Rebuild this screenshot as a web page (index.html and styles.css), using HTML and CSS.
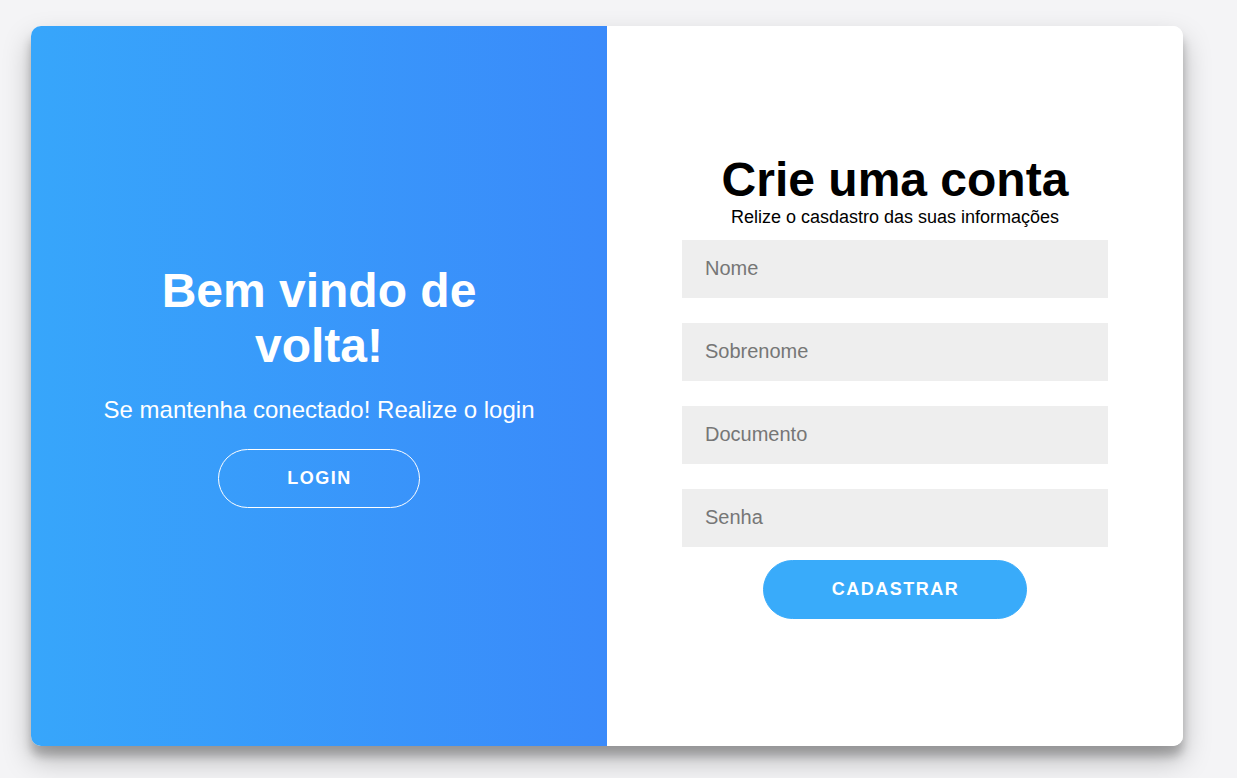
FILE: index.html
```html
<!DOCTYPE html>
<html lang="pt-BR">
<head>
<meta charset="utf-8">
<title>Crie uma conta</title>
<link rel="stylesheet" href="styles.css">
</head>
<body>
  <div class="card">
    <section class="panel panel-welcome">
      <h1 class="title">Bem vindo de volta!</h1>
      <p class="lead">Se mantenha conectado! Realize o login</p>
      <button class="btn btn-ghost" type="button">Login</button>
    </section>
    <section class="panel panel-form">
      <h1 class="title title-dark">Crie uma conta</h1>
      <span class="subtitle">Relize o casdastro das suas informações</span>
      <form class="form">
        <input class="field" type="text" placeholder="Nome">
        <input class="field" type="text" placeholder="Sobrenome">
        <input class="field" type="text" placeholder="Documento">
        <input class="field" type="password" placeholder="Senha">
        <button class="btn btn-solid" type="button">Cadastrar</button>
      </form>
    </section>
  </div>
</body>
</html>
```

FILE: styles.css
```css
* { box-sizing: border-box; }

html, body {
  margin: 0;
  height: 100%;
}

body {
  background: #f4f4f6;
  font-family: "Liberation Sans", Arial, sans-serif;
  padding: 26px 31px;
  overflow: hidden;
}

.card {
  width: 1152px;
  height: 720px;
  display: flex;
  border-radius: 10px;
  background: #fff;
  overflow: hidden;
  box-shadow: 0 14px 28px rgba(0, 0, 0, 0.25), 0 10px 10px rgba(0, 0, 0, 0.22);
}

.panel {
  width: 50%;
  display: flex;
  flex-direction: column;
  align-items: center;
  justify-content: center;
  text-align: center;
}

.panel-welcome {
  background: linear-gradient(to right, #37a6fb, #3a8afa);
  color: #fff;
  padding: 0 64px 2px;
}

.panel-form {
  background: #fff;
  padding: 0 75px 2px;
}

.title {
  margin: 0;
  font-size: 48px;
  font-weight: 700;
  line-height: 55px;
}

.title-dark {
  color: #000;
}

.lead {
  margin: 23px 0 25px;
  font-size: 24px;
  line-height: 28px;
}

.subtitle {
  display: block;
  font-size: 18px;
  line-height: 21px;
  color: #000;
  margin-bottom: 12px;
}

.form {
  width: 100%;
  display: flex;
  flex-direction: column;
  align-items: center;
  gap: 25px;
}

.field {
  width: 100%;
  height: 58px;
  border: none;
  background: #eeeeee;
  padding: 0 23px;
  font-family: "Liberation Sans", Arial, sans-serif;
  font-size: 20px;
  color: #333;
  outline: none;
}

.field::placeholder {
  color: #767676;
}

.btn {
  font-family: "Liberation Sans", Arial, sans-serif;
  font-size: 18px;
  font-weight: 700;
  letter-spacing: 1.5px;
  text-transform: uppercase;
  color: #fff;
  border-radius: 30px;
  height: 59px;
  padding: 0 67px 0 68px;
  cursor: pointer;
}

.btn-ghost {
  background: transparent;
  border: 1px solid #fff;
}

.btn-solid {
  background: #39abfa;
  border: 1px solid #39abfa;
  margin-top: -12px;
}
```
